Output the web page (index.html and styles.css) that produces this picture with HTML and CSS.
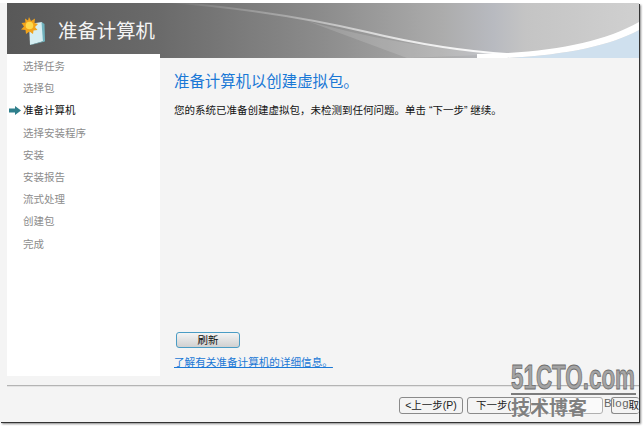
FILE: index.html
```html
<!DOCTYPE html>
<html lang="zh-CN">
<head>
  <meta charset="UTF-8" />
  <title>准备计算机</title>
  <link rel="stylesheet" href="styles.css">
</head>
<body>
<div class="window">
  <header class="banner">
    <svg class="banner-art" width="632" height="55" viewBox="0 0 632 55">
      <defs>
        <linearGradient id="swoosh" x1="0" x2="1" y1="0" y2="0">
          <stop offset="0" stop-color="#fff" stop-opacity="0"/>
          <stop offset="0.35" stop-color="#fff" stop-opacity="0.3"/>
          <stop offset="0.7" stop-color="#fff" stop-opacity="0.8"/>
          <stop offset="1" stop-color="#fff"/>
        </linearGradient>
      </defs>
      <path d="M300 18 C360 34 420 46 500 51 L400 55 Z" fill="#fff" opacity="0.14"/>
      <path d="M632 27 C605 42 560 52 500 55 L632 55 Z" fill="#cfe0ee"/>
      <path d="M632 19 C595 40 540 50 470 51 L470 55 L500 55 C560 52 605 42 632 27 Z" fill="#fff"/>
      <path d="M150 -2 C230 4 300 15 360 29 C410 41 460 50 520 52" fill="none" stroke="url(#swoosh)" stroke-width="2"/>
    </svg>
    <svg class="banner-icon" width="25" height="28" viewBox="0 0 25 28">
      <path d="M8 7 L21 5 L23 24 L9 28 Z" fill="#d6eef2"/>
      <path d="M20.5 5 L23.5 7 L24 24 L22 25 Z" fill="#6fb2bd"/>
      <path d="M9 28 L23 24 L24 24.5 L10 28 Z" fill="#6fb2bd"/>
      <path d="M8 0 L10 4 L14 1.5 L13.5 6 L17 7 L14 10 L16.5 13 L12.5 13.5 L12 17 L8.5 14.5 L5 17 L4.5 13 L0 12.5 L3 9.5 L0.5 6 L4.5 5.5 L4 1.5 L7 3.5 Z" fill="#f2a31a"/>
      <circle cx="8.5" cy="8.5" r="3.8" fill="#ffd94a"/>
    </svg>
    <span class="banner-title">准备计算机</span>
  </header>

  <div class="middle">
    <nav class="steps">
      <div class="step">选择任务</div>
      <div class="step">选择包</div>
      <div class="step current">
        <svg class="step-arrow" width="12" height="9" viewBox="0 0 12 9"><path d="M0 2.5 H6 V0 L12 4.5 L6 9 V6.5 H0 Z" fill="#2f7f8c"/></svg>
        准备计算机
      </div>
      <div class="step">选择安装程序</div>
      <div class="step">安装</div>
      <div class="step">安装报告</div>
      <div class="step">流式处理</div>
      <div class="step">创建包</div>
      <div class="step">完成</div>
    </nav>
    <main class="content">
      <h1 class="heading">准备计算机以创建虚拟包。</h1>
      <p class="message">您的系统已准备创建虚拟包，未检测到任何问题。单击 “下一步” 继续。</p>
      <div class="spacer"></div>
      <button class="refresh">刷新</button>
      <a class="more" href="#">了解有关准备计算机的详细信息。</a>
    </main>
  </div>

  <footer class="actions">
    <button class="action">&lt;上一步(P)</button>
    <button class="action next">下一步(</button>
    <button class="action blank"></button>
    <button class="action last">取</button>
  </footer>

  <div class="watermark">
    <div class="wm-site"><span class="wm-letters">51CTO.com</span></div>
    <div class="wm-row"><span class="wm-cn">技术博客</span><span class="wm-blog">Blog</span></div>
  </div>
</div>
</body>
</html>
```

FILE: styles.css
```css
html, body {
  margin: 0;
  padding: 0;
  background: #fff;
}
body {
  width: 644px;
  height: 426px;
  overflow: hidden;
  font-family: "Liberation Sans", "Noto Sans CJK SC", sans-serif;
}
.window {
  position: relative;
  box-sizing: border-box;
  width: 639px;
  height: 419px;
  margin-top: 3px;
  padding-left: 7px;
  background: #f4f4f4;
  box-shadow: 1px 1px 0 #333, 2px 2px 2px #888;
  display: flex;
  flex-direction: column;
}
.banner {
  position: relative;
  height: 55px;
  flex: none;
  display: flex;
  align-items: center;
  background: linear-gradient(to right, #585858 0%, #6a6a6a 24%, #8c8c8c 50%, #acacac 69%, #b8bac0 77%, #c4c4c4 82%, #d0d0d0 100%);
  overflow: hidden;
}
.banner-art {
  position: absolute;
  left: 0;
  top: 0;
}
.banner-icon {
  position: relative;
  margin-left: 14px;
  margin-top: 1px;
}
.banner-title {
  position: relative;
  margin-left: 12px;
  margin-top: -3px;
  color: #f4f4f4;
  font-size: 19.4px;
}
.middle {
  display: flex;
  height: 322px;
  margin-top: -4px;
  flex: none;
}
.steps {
  position: relative;
  width: 153px;
  box-sizing: border-box;
  padding-top: 1px;
  background: #fff;
}
.step {
  position: relative;
  height: 22.2px;
  line-height: 22.2px;
  padding-left: 16px;
  font-size: 10.5px;
  color: #8c8c8c;
}
.step.current {
  color: #111;
}
.step-arrow {
  position: absolute;
  left: 2px;
  top: 7px;
}
.content {
  flex: 1;
  display: flex;
  flex-direction: column;
  align-items: flex-start;
  padding: 18px 0 7px 14px;
}
.heading {
  margin: 0;
  font-size: 15.4px;
  font-weight: normal;
  line-height: 20px;
  color: #1a78d6;
}
.message {
  margin: 10px 0 0;
  font-size: 10.5px;
  line-height: 16px;
  color: #111;
}
.spacer {
  flex: 1;
}
.refresh {
  width: 64px;
  height: 16px;
  margin: 0 0 0 2px;
  padding: 0;
  font-family: inherit;
  font-size: 10.5px;
  line-height: 12px;
  color: #111;
  border: 1px solid #4a9cc4;
  border-radius: 3px;
  background: linear-gradient(to bottom, #f4f4f4, #d0d0d0);
}
.more {
  margin-top: 8px;
  font-size: 10.6px;
  line-height: 13px;
  color: #1a78d6;
}
.actions {
  margin-top: 9px;
  padding-top: 11px;
  border-top: 1px solid #b4b4b4;
  box-shadow: inset 0 1px 0 #e4e4e4;
  display: flex;
  gap: 4px;
  padding-left: 392px;
}
.action {
  flex: none;
  width: 64px;
  height: 17px;
  padding: 0;
  font-family: inherit;
  font-size: 10.5px;
  line-height: 13px;
  color: #222;
  border: 1px solid #8a8a8a;
  border-radius: 3px;
  background: #f4f4f4;
  white-space: nowrap;
}
.action.next {
  text-align: left;
  padding-left: 8px;
}
.action.blank {
  margin-left: 4px;
  background: #fafafa;
  border-color: #b0b0b0;
}
.action.last {
  width: 28px;
  margin-left: 4px;
  box-sizing: border-box;
  text-align: right;
  overflow: hidden;
  border-right: 0;
}
.watermark {
  position: absolute;
  left: 511px;
  top: 362px;
  width: 125px;
}
.wm-site {
  height: 28px;
  border-bottom: 2px solid #7c7c7c;
}
.wm-letters {
  display: block;
  font-size: 22.4px;
  line-height: 26px;
  font-weight: bold;
  white-space: nowrap;
  color: #a4a4a4;
  -webkit-text-stroke: 0.6px #6e6e6e;
  transform: scaleY(1.55);
  transform-origin: center;
}
.wm-row {
  display: flex;
  margin-top: 3px;
}
.wm-cn {
  font-size: 19px;
  line-height: 22px;
  color: #808080;
  font-weight: bold;
  text-shadow: 0 0 2px #fff;
}
.wm-blog {
  margin-left: 17px;
  margin-top: -2px;
  font-size: 11.5px;
  line-height: 14px;
  letter-spacing: 0.5px;
  color: #666;
}
```
